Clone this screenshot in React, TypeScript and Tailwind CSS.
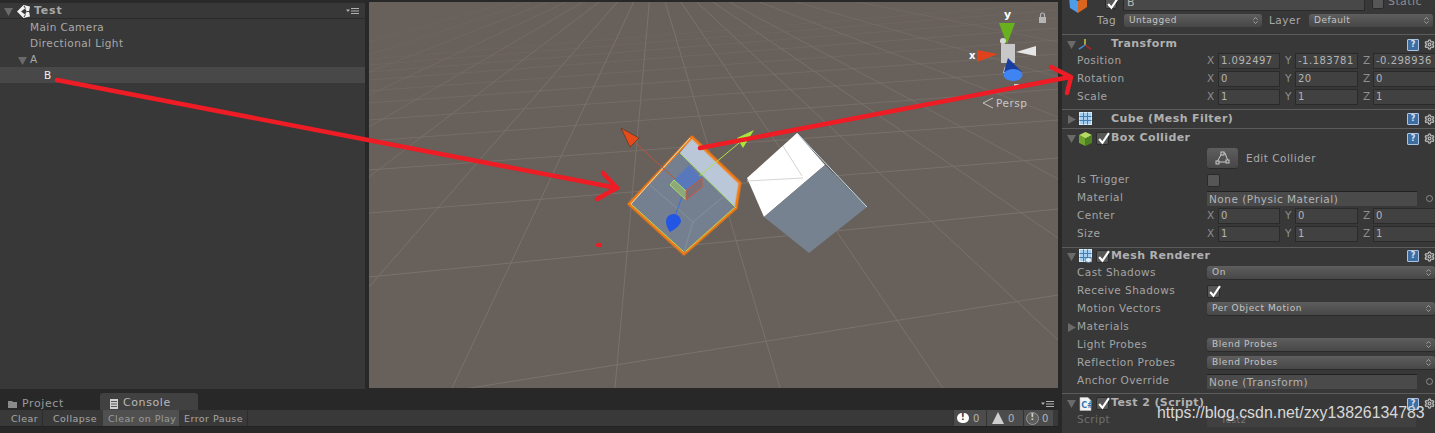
import { Settings, ChevronsUpDown } from "lucide-react";

const font = { fontFamily: '"DejaVu Sans", sans-serif' };

const vanishEnds = [
    [780, 388, 1], [943, 388, 1], [1058, 340, 1], [1058, 238, 0.9], [1058, 179, 0.8], [1058, 117, 0.7], [1058, 77, 0.55], [1058, 42, 0.45],
    [615, 388, 1], [452, 388, 1], [369, 287, 1], [369, 177, 0.8], [369, 127, 0.65], [369, 95, 0.5], [369, 72, 0.4], [369, 55, 0.3], [369, 42, 0.25],
];
const crossLines = [
    [404, 295, 1], [277, 209, 1], [213, 158, 0.95], [170, 120, 0.85], [141, 89, 0.75], [120, 70, 0.65],
    [103, 54, 0.55], [91, 40, 0.45], [80, 28, 0.4], [72, 18, 0.35], [65, 10, 0.3], [59, 3, 0.25],
];

const Tri = ({ open, className = "" }: { open?: boolean; className?: string }) => (
    <svg width="9" height="9" viewBox="0 0 9 9" className={className}>
        {open ? (
            <path d="M0 1 L9 1 L4.5 9 Z" fill="#6a6a6a" />
        ) : (
            <path d="M1 0 L9 4.5 L1 9 Z" fill="#6a6a6a" />
        )}
    </svg>
);

const MenuIcon = () => (
    <svg width="14" height="7" viewBox="0 0 14 7">
        <path d="M0 1.5 L4 1.5 L2 4 Z" fill="#b0b0b0" />
        <path d="M5 0.5 H13 M5 3 H13 M5 5.5 H13" stroke="#b0b0b0" strokeWidth="1" />
    </svg>
);

const UnityLogo = () => (
    <svg width="13" height="13" viewBox="0 0 13 13">
        <path d="M6.5 0 L13 1.5 L12 6.5 L13 11.5 L6.5 13 L0 6.5 Z" fill="#f2f2f2" />
        <path d="M4 6.5 L8 3.5 L9.8 6.5 L8 9.5 Z" fill="#383838" />
        <path d="M7 1 L8.5 3.5 M7 12 L8.5 9.5 M10 6.5 L12.5 6.5" stroke="#383838" strokeWidth="1" />
    </svg>
);

const Checkbox = ({ checked, big }: { checked?: boolean; big?: boolean }) => (
    <span className={`relative inline-block shrink-0 rounded-[2px] border border-[#2a2a2a] bg-[#565656] ${big ? "h-[13px] w-[13px]" : "h-[12px] w-[12px]"}`}>
        {checked && (
            <svg viewBox="0 0 12 12" className="absolute left-0 top-[-1px] h-[13px] w-[13px]">
                <path d="M2 6.5 L5 10 L11 1" fill="none" stroke="#ffffff" strokeWidth="2" />
            </svg>
        )}
    </span>
);

const HelpIcons = () => (
    <div className="ml-auto flex items-center gap-[5px]">
        <span className="flex h-[12px] w-[12px] items-center justify-center rounded-[1px] border border-[#a9c4e4] bg-[#3f6d9f] text-[8px] font-bold leading-none text-[#d8e4f2]">?</span>
        <Settings size={11} strokeWidth={3} color="#b4b4b4" />
    </div>
);

const TransformIcon = () => (
    <svg width="14" height="14" viewBox="0 0 15 15">
        <path d="M7.5 7.5 V1" stroke="#c9d03a" strokeWidth="1.6" />
        <path d="M7.5 7.5 L1 12" stroke="#3e8fd8" strokeWidth="1.6" />
        <path d="M7.5 7.5 L14 12" stroke="#b5232a" strokeWidth="1.6" />
    </svg>
);

const MeshIcon = ({ eye }: { eye?: boolean }) => (
    <svg width="13" height="14" viewBox="0 0 13 14">
        <rect x="0.5" y="0.5" width="12" height="12" fill="#a8d0ee" stroke="#d6ebfa" />
        <path d="M4.5 0.5 V12.5 M8.5 0.5 V12.5 M0.5 4.5 H12.5 M0.5 8.5 H12.5" stroke="#3f7fb5" strokeWidth="1" />
        {eye && <ellipse cx="9.5" cy="11" rx="3.5" ry="2.5" fill="#e4eef6" stroke="#386c9c" strokeWidth="0.8" />}
    </svg>
);

const ColliderIcon = () => (
    <svg width="13" height="14" viewBox="0 0 13 14">
        <path d="M6.5 0 L13 3 L6.5 6.5 L0 3 Z" fill="#b5dc62" />
        <path d="M0 3 L6.5 6.5 V14 L0 11 Z" fill="#6fa52f" />
        <path d="M13 3 L6.5 6.5 V14 L13 11 Z" fill="#4e8024" />
    </svg>
);

const ScriptIcon = () => (
    <svg width="13" height="14" viewBox="0 0 13 14">
        <path d="M1 0.5 H9 L12 3.5 V13.5 H1 Z" fill="#f2f2f2" stroke="#bcbcbc" strokeWidth="0.6" />
        <text x="2.2" y="10.5" fontSize="8" fontWeight="700" fill="#2b78b8" style={font}>C#</text>
    </svg>
);

const Label = ({ children }: { children: React.ReactNode }) => (
    <span className="w-[130px] shrink-0 text-[#a4a4a4]">{children}</span>
);

const Row = ({ children, className = "" }: { children: React.ReactNode; className?: string }) => (
    <div className={`flex h-[18px] items-center pl-[15px] text-[10.5px] tracking-[0.45px] ${className}`}>{children}</div>
);

const Vec = ({ label, x, y, z }: { label: string; x: string; y: string; z: string }) => (
    <Row>
        <Label>{label}</Label>
        {[
            ["X", x, "w-[62px]", "w-[11px]"],
            ["Y", y, "w-[63px]", "w-[15px] pl-[5px]"],
            ["Z", z, "w-[70px]", "w-[15px] pl-[5px]"],
        ].map(([axis, value, w, lw]) => (
            <div key={axis} className="flex items-center">
                <span className={`${lw} text-[#8f8f8f]`}>{axis}</span>
                <span className={`${w} h-[16px] overflow-hidden whitespace-nowrap border border-[#2a2a2a] bg-[#414141] pl-[2px] text-[10px] leading-[14px] tracking-[0.5px] text-[#b4b4b4]`}>{value}</span>
            </div>
        ))}
    </Row>
);

const Select = ({ label, value }: { label: string; value: string }) => (
    <Row>
        <Label>{label}</Label>
        <div className="flex h-[14px] flex-1 items-center justify-between rounded-[3px] border-b border-[#2a2a2a] bg-linear-to-b from-[#5e5e5e] to-[#474747] pl-[5px] pr-[2px] text-[9px] tracking-[0.6px] text-[#c4c4c4]">
            {value}
            <ChevronsUpDown size={9} color="#b4b4b4" />
        </div>
    </Row>
);

const ObjectField = ({ label, value }: { label: string; value: string }) => (
    <Row>
        <Label>{label}</Label>
        <span className="h-[15px] w-[210px] border-t border-[#222222] bg-[#4a4a4a] pl-[2px] leading-[14px] tracking-[0.5px] text-[#b4b4b4]">{value}</span>
        <span className="ml-auto mr-[2px] h-[7px] w-[7px] rounded-full border border-[#8c8c8c]" />
    </Row>
);

const Header = ({ open = true, icon, check, title, className = "" }: { open?: boolean; icon: React.ReactNode; check?: boolean; title: string; className?: string }) => (
    <div className={`flex items-center border-t border-[#5c5c5c] pl-[5px] ${className}`}>
        <Tri open={open} className="mr-[2px] shrink-0" />
        <span className="flex w-[14px] shrink-0 justify-center">{icon}</span>
        <span className={check ? "ml-[4px] mr-[2px] flex" : "w-[19px]"}>{check && <Checkbox checked big />}</span>
        <span className="text-[11px] font-bold tracking-[0.4px] text-[#b0b0b0]">{title}</span>
        <HelpIcons />
    </div>
);

const SceneView = () => (
    <svg viewBox="369 2 689 386" className="h-full w-full" preserveAspectRatio="none">
        <rect x="369" y="0" width="691" height="389" fill="#68605b" />
        <g stroke="#79726d" strokeWidth="1" fill="none">
            {vanishEnds.map(([x, y, o]) => (
                <path key={`${x}-${y}`} d={`M653 -39 L${x} ${y}`} opacity={o} />
            ))}
            {crossLines.map(([a, b, o]) => (
                <path key={a} d={`M369 ${a} L1058 ${b}`} opacity={o} />
            ))}
        </g>

        {/* cube B */}
        <path d="M797 133 L825 165 L764 217 L747 178 Z" fill="#ffffff" />
        <path d="M825 165 L867 207 L809 253 L764 217 Z" fill="#76828f" />
        <path d="M797 133 L867 207" stroke="#c4dcec" strokeWidth="1" />
        <path d="M783 146 L802 176 M747 181 L803 178" stroke="#d4d4d4" strokeWidth="1" />

        {/* selected cube A */}
        <path d="M692 137 L740 183 L736 208 L684 254 L629 204 Z" fill="#74808f" />
        <path d="M692 137 L740 183 L736 208 L680 153 Z" fill="#b9c7d8" />
        <path d="M692 137 L740 183 L736 208 L684 254 L629 204 Z" fill="none" stroke="#f57a10" strokeWidth="4" strokeLinejoin="round" opacity="0.35" />
        <path d="M692 137 L740 183 L736 208 L684 254 L629 204 Z" fill="none" stroke="#f57a10" strokeWidth="2.2" strokeLinejoin="round" />
        <path d="M680 153 L736 208 M631 204 L684 252 M734 208 L686 251" stroke="#a6dc70" strokeWidth="1" />
        <path d="M631 204 L690 138" stroke="#dce8c8" strokeWidth="1" />
        <path d="M693 222 L684 252 M693 222 L723 197 M650 185 L693 222" stroke="#8d97a3" strokeWidth="0.7" />

        {/* move gizmo */}
        <path d="M630 138 L685 188" stroke="#c0533a" strokeWidth="1" />
        <path d="M685 188 L745 138" stroke="#b2e04a" strokeWidth="1" />
        <path d="M685 188 L673 222" stroke="#3d6ee0" strokeWidth="1" />
        <path d="M621 128 L639 138 L630 147 Z" fill="#e64a19" stroke="#3a2a20" strokeWidth="0.5" />
        <path d="M754 130 L737 138 L743 148 Z" fill="#a8e63c" />
        <path d="M666 221 A7.5 7.5 0 1 1 681 222 Q678 228 670 232 Q666 227 666 221 Z" fill="#2456e6" />
        <path d="M689 165 L702 178 L686 191 L674 180 Z" fill="#5878bb" />
        <path d="M670 185 L686 200 L686 191 L674 180 Z" fill="#8fa878" stroke="#a6dc70" strokeWidth="1" />
        <path d="M686 200 L702 187 L702 178 L686 191 Z" fill="#7b6f78" stroke="#d0543a" strokeWidth="1" />
        <ellipse cx="599" cy="245" rx="3" ry="2.2" fill="#ee1c25" />

        {/* orientation gizmo */}
        <path d="M999 23 H1015 L1007 44 Z" fill="#69b01f" />
        <path d="M977 50 L998 54 L977 62 Z" fill="#e0431c" />
        <path d="M1036 46 V56 L1016 52 Z" fill="#e6e6e6" />
        <circle cx="1003" cy="41" r="3" fill="#d8d8d8" />
        <rect x="1001" y="44" width="14" height="19" fill="#c8c8c8" />
        <path d="M1003 73 L1005 66 L1007 72 Z" fill="#d8d8d8" />
        <path d="M1004 72 L1008 58 L1022 72 Z" fill="#1a3ea0" />
        <ellipse cx="1013" cy="75" rx="9.5" ry="6" fill="#3f84f2" />
        <path d="M1014 85 H1019" stroke="#ffffff" strokeWidth="1.5" />
        <rect x="1039" y="17" width="7" height="6" fill="#b5b5b5" />
        <path d="M1040.5 17 V15 A2 2 0 0 1 1044.5 15 V17" fill="none" stroke="#b5b5b5" strokeWidth="1.2" />
        <path d="M993 98 L983 103 L993 108" fill="none" stroke="#c4c4c4" strokeWidth="1" />
    </svg>
);

export default function App() {
    return (
        <div className="relative flex h-[433px] w-[1435px] overflow-hidden bg-[#282828] text-[#b4b4b4]" style={font}>
            <div className="flex w-[1058px] shrink-0 flex-col">
                <div className="flex h-[389px] shrink-0">
                    {/* hierarchy */}
                    <div className="mr-[4px] w-[365px] shrink-0 border-t-[3px] border-[#2a2a2a] bg-[#383838]">
                        <div className="flex h-[16px] items-center border-b border-[#2a2a2a] pl-[4px] pr-[5px] pt-[2px]">
                            <Tri open className="mr-[4px]" />
                            <UnityLogo />
                            <span className="ml-[4px] text-[11px] font-bold tracking-[0.8px] text-[#a8a8a8]">Test</span>
                            <span className="ml-auto"><MenuIcon /></span>
                        </div>
                        <div className="text-[10.5px] tracking-[0.42px]">
                            <div className="flex h-[16px] items-center pl-[30px] pt-[2px] text-[#a9a9a9]">Main Camera</div>
                            <div className="flex h-[16px] items-center pl-[30px] pt-[2px] text-[#a9a9a9]">Directional Light</div>
                            <div className="flex h-[16px] items-center pl-[18px] pt-[2px] text-[#a9a9a9]">
                                <Tri open className="mr-[3px]" />A
                            </div>
                            <div className="flex h-[16px] items-center bg-[#484848] pl-[44px] pt-[2px] text-[#f0f0f0]">B</div>
                        </div>
                    </div>
                    {/* scene */}
                    <div className="relative flex-1 pb-[1px] pt-[2px]">
                        <SceneView />
                        <span className="absolute left-[627px] top-[96px] text-[10.5px] tracking-[0.5px] text-[#c9c9c9]">Persp</span>
                        <span className="absolute left-[600px] top-[51px] text-[10px] font-bold leading-none text-white">x</span>
                        <span className="absolute left-[635px] top-[9px] text-[11px] font-bold leading-none text-white">y</span>
                    </div>
                </div>

                {/* console */}
                <div className="relative flex flex-1 flex-col bg-[#282828]">
                    <div className="flex h-[21px] items-end justify-between pl-[8px] pr-[3px]">
                        <div className="flex items-end">
                            <div className="flex h-[16px] w-[92px] items-center gap-[5px] pt-[4px] text-[11px] tracking-[0.6px] text-[#9a9a9a]">
                                <svg width="9" height="8" viewBox="0 0 9 8"><path d="M0 1 H4 L5 2 H9 V8 H0 Z" fill="#8a8a8a" /></svg>
                                Project
                            </div>
                            <div className="flex h-[17px] w-[98px] items-center gap-[5px] rounded-t-[3px] bg-[#414141] pl-[10px] pt-[4px] text-[11px] tracking-[0.6px] text-[#b8b8b8]">
                                <svg width="8" height="10" viewBox="0 0 8 10">
                                    <rect width="8" height="10" fill="#d0d0d0" />
                                    <path d="M1 2.5 H7 M1 5 H7 M1 7.5 H7" stroke="#555555" strokeWidth="1" />
                                </svg>
                                Console
                            </div>
                        </div>
                        <span className="mb-[2px]"><MenuIcon /></span>
                    </div>
                    <div className="flex h-[17px] items-stretch border-b border-[#222222] bg-[#393939] pl-[5px] text-[9.5px] tracking-[0.45px] text-[#a8a8a8]">
                        <span className="flex w-[38px] items-center border-r border-[#2c2c2c] pl-[6px] pt-[2px]">Clear</span>
                        <span className="ml-[5px] flex w-[55px] items-center pl-[5px] pt-[2px]">Collapse</span>
                        <span className="flex w-[76px] items-center bg-[#505050] pl-[5px] pt-[2px] text-[#9c9c9c]">Clear on Play</span>
                        <span className="flex w-[69px] items-center border-r border-[#2c2c2c] pl-[5px] pt-[2px]">Error Pause</span>
                        <div className="ml-auto mr-[5px] flex text-[10px] text-[#b4b4b4]">
                            <span className="flex w-[34px] items-center gap-[4px] border-x border-[#333333] bg-[#4c4c4c] pl-[3px]">
                                <span className="flex h-[10px] w-[12px] items-center justify-center rounded-full bg-white text-[9px] font-bold text-[#333333]">!</span>0
                            </span>
                            <span className="flex w-[37px] items-center gap-[4px] border-r border-[#333333] bg-[#4c4c4c] pl-[5px]">
                                <span className="flex h-0 w-0 border-x-[6px] border-b-[12px] border-x-transparent border-b-[#cfcfcf]" />0
                            </span>
                            <span className="flex w-[29px] items-center gap-[3px] bg-[#4c4c4c] pl-[2px]">
                                <span className="flex h-[13px] w-[13px] items-center justify-center rounded-full border border-[#999999] bg-[#5e5e5e] text-[9px] font-bold text-[#d0d0d0]">!</span>0
                            </span>
                        </div>
                    </div>
                </div>
            </div>

            {/* inspector */}
            <div className="flex-1 overflow-hidden border-l-4 border-[#282828] bg-[#383838]">
                <div className="mt-[-8px] flex h-[21px] items-center pl-[6px] text-[11px] tracking-[0.4px]">
                    <svg width="20" height="20" viewBox="0 0 20 20" className="shrink-0">
                        <path d="M1 4 L10 8 V20 L2 15 Z" fill="#4f9ce8" />
                        <path d="M10 8 L19 4 V14 L10 20 Z" fill="#d9651f" />
                    </svg>
                    <span className="ml-[17px] mr-[6px] flex"><Checkbox checked /></span>
                    <span className="h-[16px] w-[242px] border border-[#2a2a2a] bg-[#484848] pl-[3px] leading-[14px]">B</span>
                    <span className="ml-[7px] mr-[4px] flex"><Checkbox /></span>
                    <span className="text-[#8f8f8f]">Static</span>
                </div>
                <div className="flex h-[21px] items-center pb-[6px] pl-[35px] text-[10.5px] tracking-[0.5px] text-[#a9a9a9]">
                    <span className="w-[27px]">Tag</span>
                    <span className="flex h-[13px] w-[138px] items-center justify-between rounded-[3px] bg-linear-to-b from-[#5e5e5e] to-[#474747] pl-[5px] pr-[2px] text-[9px] text-[#c4c4c4]">
                        Untagged<ChevronsUpDown size={9} color="#b4b4b4" />
                    </span>
                    <span className="ml-[7px] w-[40px]">Layer</span>
                    <span className="flex h-[13px] w-[124px] items-center justify-between rounded-[3px] bg-linear-to-b from-[#5e5e5e] to-[#474747] pl-[5px] pr-[2px] text-[9px] text-[#c4c4c4]">
                        Default<ChevronsUpDown size={9} color="#b4b4b4" />
                    </span>
                </div>

                <Header icon={<TransformIcon />} title="Transform" className="h-[20px]" />
                <div className="mt-[-2px]">
                    <Vec label="Position" x="1.092497" y="-1.183781" z="-0.298936" />
                    <Vec label="Rotation" x="0" y="20" z="0" />
                    <Vec label="Scale" x="1" y="1" z="1" />
                </div>
                <div className="h-[3px]" />
                <Header open={false} icon={<MeshIcon />} title="Cube (Mesh Filter)" className="h-[19px]" />
                <Header icon={<ColliderIcon />} check title="Box Collider" className="h-[20px]" />
                <div className="flex h-[21px] items-center pl-[145px] text-[10.5px] tracking-[0.5px] text-[#a9a9a9]">
                    <span className="mr-[8px] flex h-[21px] w-[31px] items-center justify-center rounded-[3px] border-b border-[#2a2a2a] bg-linear-to-b from-[#5e5e5e] to-[#474747]">
                        <svg width="16" height="14" viewBox="0 0 16 14"><path d="M2 11 L7 2 H10 L13 10 M2 11 H12" fill="none" stroke="#c8c8c8" strokeWidth="1" /><rect x="6" y="1" width="3" height="3" fill="#565656" stroke="#c8c8c8" /><rect x="11" y="9" width="3" height="3" fill="#565656" stroke="#c8c8c8" /><rect x="1" y="10" width="3" height="3" fill="#565656" stroke="#c8c8c8" /></svg>
                    </span>
                    Edit Collider
                </div>
                <div className="h-[2px]" />
                <Row><Label>Is Trigger</Label><Checkbox big /></Row>
                <ObjectField label="Material" value="None (Physic Material)" />
                <Vec label="Center" x="0" y="0" z="0" />
                <Vec label="Size" x="1" y="1" z="1" />
                <div className="h-[4px]" />
                <Header icon={<MeshIcon eye />} check title="Mesh Renderer" className="h-[17px]" />
                <Select label="Cast Shadows" value="On" />
                <Row><Label>Receive Shadows</Label><Checkbox checked big /></Row>
                <Select label="Motion Vectors" value="Per Object Motion" />
                <Row className="relative">
                    <Tri className="absolute left-[5px]" />
                    <Label>Materials</Label>
                </Row>
                <Select label="Light Probes" value="Blend Probes" />
                <Select label="Reflection Probes" value="Blend Probes" />
                <ObjectField label="Anchor Override" value="None (Transform)" />
                <div className="h-[3px]" />
                <Header icon={<ScriptIcon />} check title="Test 2 (Script)" className="h-[18px] pt-[2px]" />
                <Row className="opacity-50">
                    <Label>Script</Label>
                    <span className="h-[14px] w-[209px] bg-[#484848] pl-[14px] text-[9px] leading-[14px]">Test2</span>
                </Row>
            </div>

            {/* annotation arrows */}
            <svg viewBox="0 0 1435 433" className="pointer-events-none absolute inset-0 h-[433px] w-[1435px]">
                <g fill="none" stroke="#ee1c25" strokeWidth="4.5" strokeLinecap="round" strokeLinejoin="round">
                    <path d="M57 80 L617 188" />
                    <path d="M603 173 L617 188 L597 199" />
                    <path d="M700 148 L1070 77" />
                    <path d="M1051 67 L1071 77 L1067 93" />
                </g>
            </svg>
            <span className="absolute left-[1157px] top-[404px] text-[15.9px] leading-[18px] text-[#d8d8d8]" style={{ fontFamily: '"Liberation Sans", sans-serif' }}>
                https://blog.csdn.net/zxy13826134783
            </span>
        </div>
    );
}
